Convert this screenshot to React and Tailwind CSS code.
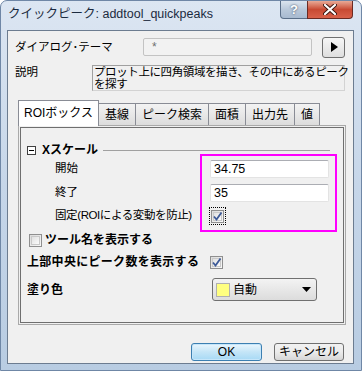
import React from "react";

const font = "font-['Liberation_Sans','Noto_Sans_CJK_JP',sans-serif]";

function CheckBox({ checked, focus }) {
  const box = (
    <span className="flex h-[13px] w-[13px] items-center justify-center border border-[#8f8f8f] bg-gradient-to-br from-[#dcdcdc] to-[#f8f8f8]">
      <span className="flex h-[9px] w-[9px] items-center justify-center border border-[#c9c9c9] bg-gradient-to-br from-[#e1e1e1] to-[#fbfbfb]">
        {checked && (
          <svg width="9" height="9" viewBox="0 0 9 9" className="overflow-visible">
            <path d="M1 4.5 L3.5 7.5 L8.5 0.5" fill="none" stroke="#3d5a98" strokeWidth="1.8" />
          </svg>
        )}
      </span>
    </span>
  );
  if (focus) {
    return (
      <span className="flex h-[18px] w-[17px] items-center justify-center border border-dotted border-black">
        {box}
      </span>
    );
  }
  return box;
}

function Tab({ label, active }) {
  if (active) {
    return (
      <div className="relative z-10 -mb-px flex h-[26px] items-center border border-b-0 border-[#898c95] bg-white px-[5px] pb-[2px] text-[12px]">
        {label}
      </div>
    );
  }
  return (
    <div className="-ml-px flex h-[22px] items-center border border-b-0 border-[#898c95] bg-gradient-to-b from-[#f3f3f3] to-[#dcdcdc] px-[6px] text-[12px]">
      {label}
    </div>
  );
}

export default function App() {
  return (
    <div className={`${font} relative h-[371px] w-[362px] overflow-hidden rounded-t-[7px] border border-[#6f87a6] bg-gradient-to-b from-[#dce6f2] via-[#c6d6e9] to-[#b8cce2] text-black`}>
      {/* title bar */}
      <div className="flex h-[29px] items-start">
        <div className="pl-[7px] pt-[6px] text-[12.5px] leading-[14px] text-[#1b2b40]">
          クイックピーク: addtool_quickpeaks
        </div>
        <div className="ml-auto mr-[8px] flex">
          <div className="flex h-[18px] w-[28px] items-center justify-center rounded-bl-[4px] border border-t-0 border-[#5a6e88] bg-gradient-to-b from-[#dbe4ee] via-[#b9c8da] to-[#a8bad0] text-[13px] font-bold leading-none text-white [text-shadow:0_0_2px_#2b3a50]">
            ?
          </div>
          <div className="-ml-px flex h-[18px] w-[46px] items-center justify-center rounded-br-[4px] border border-t-0 border-[#6b2a22] bg-gradient-to-b from-[#e8a996] via-[#c84a33] to-[#d9614a]">
            <svg width="14" height="11" viewBox="0 0 14 11">
              <path d="M2 1 L12 10 M12 1 L2 10" stroke="#3b1610" strokeWidth="4" strokeLinecap="round" />
              <path d="M2 1 L12 10 M12 1 L2 10" stroke="#ffffff" strokeWidth="2.2" strokeLinecap="round" />
            </svg>
          </div>
        </div>
      </div>

      {/* client area */}
      <div className="ml-[6px] mr-[7px] flex h-[334px] flex-col border border-[#6c7c90] bg-[#f0f0f0] text-[11.5px]">
        {/* dialog theme */}
        <div className="ml-[7px] mt-[6px] flex h-[20px] items-center">
          <div className="w-[128px] leading-[14px]">ダイアログ･テーマ</div>
          <div className="flex h-[18px] w-[169px] items-center rounded-[2px] border border-[#c3c3c3] bg-[#f2f2f2] px-[8px] text-[12px] text-[#707070]">
            *
          </div>
          <div className="ml-[10px] flex h-[21px] w-[23px] items-center justify-center rounded-[3px] border border-[#707070] bg-gradient-to-b from-[#f6f6f6] to-[#dedede]">
            <svg width="8" height="10" viewBox="0 0 8 10">
              <path d="M1 0 L8 5 L1 10 Z" fill="#000" />
            </svg>
          </div>
        </div>

        {/* description */}
        <div className="ml-[7px] mt-[8px] flex">
          <div className="w-[77px] leading-[14px]">説明</div>
          <div className="h-[26px] w-[253px] whitespace-nowrap border border-[#d3d3d3] border-l-[#a0a0a0] border-t-[#a0a0a0] pl-[1px] text-[11.5px] leading-[12px] tracking-[-0.4px]">
            プロット上に四角領域を描き、その中にあるピーク<br />を探す
          </div>
        </div>

        {/* tabs */}
        <div className="ml-[10px] mt-[9px] flex items-end">
          <Tab label="ROIボックス" active />
          <Tab label="基線" />
          <Tab label="ピーク検索" />
          <Tab label="面積" />
          <Tab label="出力先" />
          <Tab label="値" />
        </div>

        {/* tab pane */}
        <div className="ml-[10px] h-[200px] w-[328px] border border-[#a9a9a9] p-px">
          <div className="relative flex h-full flex-col border border-[#6f6f6f] text-[11.5px]">
            {/* Xスケール header */}
            <div className="ml-[6px] mt-[15px] flex h-[14px] items-center">
              <span className="flex h-[9px] w-[9px] items-center justify-center border border-[#404040] bg-white">
                <span className="h-px w-[5px] bg-black" />
              </span>
              <span className="ml-[6px] text-[12px] font-bold leading-[14px]">Xスケール</span>
              <span className="ml-[5px] h-px w-[227px] bg-[#a0a0a0]" />
            </div>

            <div className="ml-[34px] mt-[3px] flex h-[18px] items-center">
              <div className="w-[155px]">開始</div>
              <div className="flex h-[18px] w-[119px] items-center rounded-[2px] border border-[#e3e3e3] border-t-[#abadb3] bg-white px-[3px] text-[12.5px]">
                34.75
              </div>
            </div>
            <div className="ml-[34px] mt-[6px] flex h-[18px] items-center">
              <div className="w-[155px]">終了</div>
              <div className="flex h-[18px] w-[119px] items-center rounded-[2px] border border-[#e3e3e3] border-t-[#abadb3] bg-white px-[3px] text-[12.5px]">
                35
              </div>
            </div>
            <div className="ml-[34px] mt-[5px] flex h-[18px] items-center">
              <div className="w-[154px] tracking-[-0.4px]">固定(ROIによる変動を防止)</div>
              <CheckBox checked focus />
            </div>

            <div className="ml-[8px] mt-[8px] flex h-[14px] items-center">
              <CheckBox />
              <span className="ml-[3px] text-[12px] font-bold">ツール名を表示する</span>
            </div>
            <div className="ml-[6px] mt-[8px] flex h-[14px] items-center">
              <span className="w-[183px] text-[12px] font-bold tracking-[0.3px]">上部中央にピーク数を表示する</span>
              <CheckBox checked />
            </div>
            <div className="ml-[6px] mt-[9px] flex h-[23px] items-center">
              <span className="w-[185px] text-[12px] font-bold">塗り色</span>
              <div className="flex h-[23px] w-[105px] items-center rounded-[3px] border border-[#707070] bg-gradient-to-b from-[#f3f3f3] to-[#dcdcdc] pl-[3px]">
                <span className="h-[14px] w-[14px] border border-[#b0b0b0] bg-[#ffff80]" />
                <span className="ml-[3px] text-[12px]">自動</span>
                <svg className="ml-auto mr-[5px]" width="9" height="5" viewBox="0 0 9 5">
                  <path d="M0 0 L9 0 L4.5 5 Z" fill="#000" />
                </svg>
              </div>
            </div>

            {/* annotation highlight */}
            <div className="pointer-events-none absolute left-[179px] top-[26px] h-[78px] w-[137px] border-[2.5px] border-[#ff00ff]" />
          </div>
        </div>

        {/* bottom buttons */}
        <div className="mr-[9px] mt-auto mb-[2px] flex justify-end gap-[12px]">
          <div className="flex h-[18px] w-[71px] items-center justify-center rounded-[3px] border border-[#3c7fb1] bg-gradient-to-b from-[#eaf6fd] via-[#c4e5f7] to-[#a7d9f5] text-[12px] shadow-[inset_0_0_0_1px_#c6e6fa]">
            OK
          </div>
          <div className="flex h-[18px] w-[70px] items-center justify-center rounded-[3px] border border-[#707070] bg-gradient-to-b from-[#f2f2f2] via-[#ebebeb] to-[#d6d6d6] text-[12px]">
            キャンセル
          </div>
        </div>
      </div>
    </div>
  );
}
